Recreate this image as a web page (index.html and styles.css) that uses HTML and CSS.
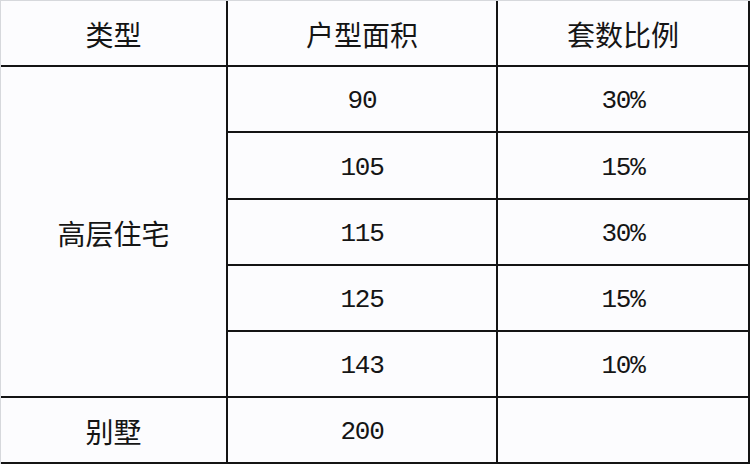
FILE: index.html
```html
<!DOCTYPE html>
<html lang="zh">
<head>
<meta charset="utf-8">
<title>户型面积</title>
<link rel="stylesheet" href="styles.css">
</head>
<body>
<div class="table">
  <div class="cell head">类型</div>
  <div class="cell head">户型面积</div>
  <div class="cell head">套数比例</div>

  <div class="cell label span">高层住宅</div>
  <div class="cell num">90</div>
  <div class="cell num">30%</div>
  <div class="cell num">105</div>
  <div class="cell num">15%</div>
  <div class="cell num">115</div>
  <div class="cell num">30%</div>
  <div class="cell num">125</div>
  <div class="cell num">15%</div>
  <div class="cell num">143</div>
  <div class="cell num">10%</div>

  <div class="cell label">别墅</div>
  <div class="cell num">200</div>
  <div class="cell"></div>
</div>
</body>
</html>
```

FILE: styles.css
```css
html, body {
  margin: 0;
  padding: 0;
  background: #fcfcfe;
}

.table {
  width: 750px;
  height: 464px;
  box-sizing: border-box;
  display: grid;
  grid-template-columns: 225px 268px 250px;
  grid-template-rows: 64px 64px 65px 64px 64px 64px 64px;
  gap: 2px;
  background: #141414;
  border-top: 1px solid #d6d8dc;
  border-left: 1px solid #d6d8dc;
  padding: 0 2px 2px 0;
}

.cell {
  background: #fcfcfe;
  display: flex;
  align-items: center;
  justify-content: center;
  color: #151515;
}

.head,
.label {
  font-family: "Noto Sans CJK SC", "Noto Sans", sans-serif;
  font-size: 28px;
  padding-top: 2px;
}

.span {
  grid-row: 2 / 7;
}

.num {
  font-family: "Liberation Mono", "DejaVu Sans Mono", monospace;
  font-size: 26px;
  letter-spacing: -1.2px;
  padding-top: 4px;
}
```
